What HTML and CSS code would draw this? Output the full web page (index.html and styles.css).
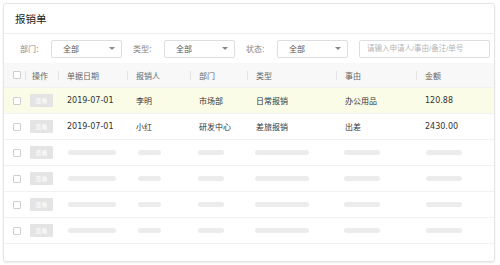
FILE: index.html
```html
<!DOCTYPE html>
<html lang="zh-CN">
<head>
  <meta charset="UTF-8">
  <title>报销单</title>
  <link rel="stylesheet" href="styles.css">
</head>
<body>
  <div class="card">
    <div class="card-title">报销单</div>

    <!-- 筛选条件 -->
    <div class="filters">
      <div class="filter">
        <span class="filter-label">部门:</span>
        <div class="select"><span>全部</span><i class="arrow"></i></div>
      </div>
      <div class="filter">
        <span class="filter-label">类型:</span>
        <div class="select"><span>全部</span><i class="arrow"></i></div>
      </div>
      <div class="filter">
        <span class="filter-label">状态:</span>
        <div class="select"><span>全部</span><i class="arrow"></i></div>
      </div>
      <div class="search">请输入申请人/事由/备注/单号</div>
    </div>

    <!-- 表格 -->
    <div class="table">
      <div class="row head">
        <div class="cell"><span class="check"></span></div>
        <div class="cell sep">操作</div>
        <div class="cell sep">单据日期</div>
        <div class="cell sep">报销人</div>
        <div class="cell sep">部门</div>
        <div class="cell sep">类型</div>
        <div class="cell sep">事由</div>
        <div class="cell sep">金额</div>
      </div>
      <div class="row active">
        <div class="cell"><span class="check"></span></div>
        <div class="cell"><span class="btn">查看</span></div>
        <div class="cell">2019-07-01</div>
        <div class="cell">李明</div>
        <div class="cell">市场部</div>
        <div class="cell">日常报销</div>
        <div class="cell">办公用品</div>
        <div class="cell">120.88</div>
      </div>
      <div class="row">
        <div class="cell"><span class="check"></span></div>
        <div class="cell"><span class="btn">查看</span></div>
        <div class="cell">2019-07-01</div>
        <div class="cell">小红</div>
        <div class="cell">研发中心</div>
        <div class="cell">差旅报销</div>
        <div class="cell">出差</div>
        <div class="cell">2430.00</div>
      </div>
      <div class="row skeleton">
        <div class="cell"><span class="check"></span></div>
        <div class="cell"><span class="btn">查看</span></div>
        <div class="cell"><i class="bar w-date"></i></div>
        <div class="cell"><i class="bar w-name"></i></div>
        <div class="cell"><i class="bar w-dept"></i></div>
        <div class="cell"><i class="bar w-type"></i></div>
        <div class="cell"><i class="bar w-reason"></i></div>
        <div class="cell"><i class="bar w-amount"></i></div>
      </div>
      <div class="row skeleton">
        <div class="cell"><span class="check"></span></div>
        <div class="cell"><span class="btn">查看</span></div>
        <div class="cell"><i class="bar w-date"></i></div>
        <div class="cell"><i class="bar w-name"></i></div>
        <div class="cell"><i class="bar w-dept"></i></div>
        <div class="cell"><i class="bar w-type"></i></div>
        <div class="cell"><i class="bar w-reason"></i></div>
        <div class="cell"><i class="bar w-amount"></i></div>
      </div>
      <div class="row skeleton">
        <div class="cell"><span class="check"></span></div>
        <div class="cell"><span class="btn">查看</span></div>
        <div class="cell"><i class="bar w-date"></i></div>
        <div class="cell"><i class="bar w-name"></i></div>
        <div class="cell"><i class="bar w-dept"></i></div>
        <div class="cell"><i class="bar w-type"></i></div>
        <div class="cell"><i class="bar w-reason"></i></div>
        <div class="cell"><i class="bar w-amount"></i></div>
      </div>
      <div class="row skeleton">
        <div class="cell"><span class="check"></span></div>
        <div class="cell"><span class="btn">查看</span></div>
        <div class="cell"><i class="bar w-date"></i></div>
        <div class="cell"><i class="bar w-name"></i></div>
        <div class="cell"><i class="bar w-dept"></i></div>
        <div class="cell"><i class="bar w-type"></i></div>
        <div class="cell"><i class="bar w-reason"></i></div>
        <div class="cell"><i class="bar w-amount"></i></div>
      </div>
    </div>
  </div>
</body>
</html>
```

FILE: styles.css
```css
body {
  margin: 0;
  padding: 3px;
  background: #fff;
  font-family: "DejaVu Sans", "Noto Sans CJK SC", sans-serif;
  font-size: 8px;
  color: #333;
}

.card {
  width: 490px;
  height: 257px;
  border: 1px solid #e3e5e8;
  border-radius: 3px;
  box-shadow: 0 1px 2px rgba(0, 0, 0, 0.08);
  overflow: hidden;
}

.card-title {
  height: 29px;
  line-height: 30px;
  padding-left: 11px;
  font-size: 10.5px;
  color: #222;
  border-bottom: 1px solid #eceef0;
}

.filters {
  display: flex;
  align-items: center;
  gap: 11px;
  height: 29px;
  padding-left: 16px;
}

.filter {
  display: flex;
  align-items: center;
}

.filter-label {
  width: 31px;
  color: #888;
}

.select {
  display: flex;
  align-items: center;
  justify-content: space-between;
  width: 71px;
  height: 18px;
  padding: 0 6px 0 11px;
  box-sizing: border-box;
  border: 1px solid #dcdee2;
  border-radius: 2px;
  color: #555;
}

.arrow {
  width: 0;
  height: 0;
  border-left: 3.5px solid transparent;
  border-right: 3.5px solid transparent;
  border-top: 3.5px solid #888;
}

.search {
  width: 131px;
  height: 18px;
  box-sizing: border-box;
  border: 1px solid #dcdee2;
  border-radius: 2px;
  line-height: 16px;
  padding-left: 7px;
  color: #b5b5b5;
  font-family: "Liberation Sans", "Noto Sans CJK SC", sans-serif;
  font-size: 7.5px;
  white-space: nowrap;
  overflow: hidden;
}

.row {
  display: grid;
  grid-template-columns: 21px 33px 69px 63px 57px 89px 80px 1fr;
  height: 26px;
  border-bottom: 1px solid #f2f2f3;
  box-sizing: border-box;
}

.row.head {
  height: 25px;
  background: #f8f8f9;
  color: #666;
}

.row.active {
  background: #fbfce8;
}

.cell {
  display: flex;
  align-items: center;
  padding-left: 9px;
  position: relative;
  white-space: nowrap;
}

.cell:nth-child(2) {
  padding-left: 5px;
}

.head .cell:nth-child(2) {
  padding-left: 7px;
}

.cell.sep::before {
  content: "";
  position: absolute;
  left: 0;
  top: 8px;
  height: 9px;
  border-left: 1px solid #e4e4e6;
}

.check {
  width: 6px;
  height: 6px;
  border: 1px solid #cfcfcf;
  border-radius: 1px;
  background: #fff;
}

.btn {
  display: flex;
  align-items: center;
  justify-content: center;
  width: 23px;
  height: 13px;
  background: #e4e4e4;
  color: #fff;
  border-radius: 1px;
  font-size: 6px;
}

.bar {
  display: block;
  height: 5px;
  border-radius: 3px;
  background: #ececec;
}

.skeleton .cell:nth-child(3) { padding-left: 10px; }
.skeleton .cell:nth-child(4) { padding-left: 11px; }
.skeleton .cell:nth-child(5) { padding-left: 8px; }
.skeleton .cell:nth-child(6) { padding-left: 8px; }
.skeleton .cell:nth-child(7) { padding-left: 8px; }
.skeleton .cell:nth-child(8) { padding-left: 10px; }

.w-date { width: 48px; }
.w-name { width: 23px; }
.w-dept { width: 26px; }
.w-type { width: 54px; }
.w-reason { width: 36px; }
.w-amount { width: 36px; }
```
